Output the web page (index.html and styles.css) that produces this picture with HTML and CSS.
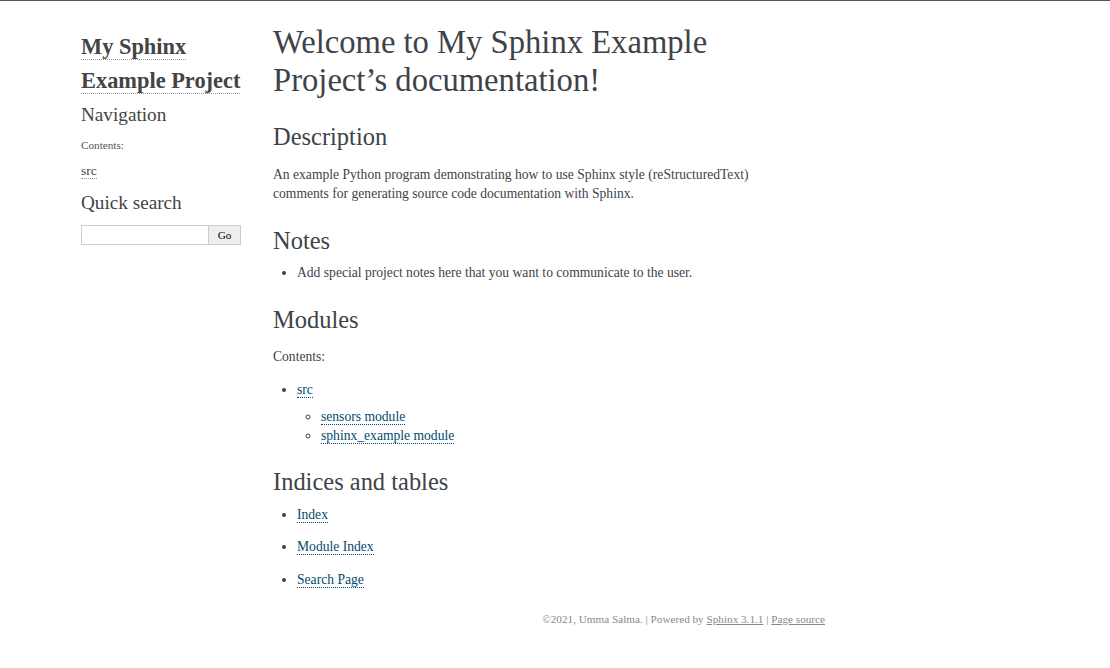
FILE: index.html
```html
<!DOCTYPE html>
<html lang="en">
<head>
<meta charset="utf-8">
<title>Welcome to My Sphinx Example Project’s documentation!</title>
<link rel="stylesheet" href="styles.css">
</head>
<body>
<div class="document">
  <div class="sphinxsidebar">
    <div class="sidebar-wrapper">
      <h1 class="logo"><a href="#">My Sphinx Example Project</a></h1>
      <h3 class="side-title">Navigation</h3>
      <p class="caption">Contents:</p>
      <ul class="side-toc">
        <li><a href="#">src</a></li>
      </ul>
      <h3 class="side-title">Quick search</h3>
      <form class="search">
        <input type="text" class="search-text"><input type="submit" class="search-go" value="Go">
      </form>
    </div>
  </div>
  <div class="body">
    <h1 class="title">Welcome to My Sphinx Example Project’s documentation!</h1>
    <h2 class="heading">Description</h2>
    <p class="para">An example Python program demonstrating how to use Sphinx style (reStructuredText) comments for generating source code documentation with Sphinx.</p>
    <h2 class="heading">Notes</h2>
    <ul class="list">
      <li>Add special project notes here that you want to communicate to the user.</li>
    </ul>
    <h2 class="heading">Modules</h2>
    <p class="para caption-body">Contents:</p>
    <ul class="list">
      <li><a class="ref" href="#">src</a>
        <ul class="list sub">
          <li><a class="ref" href="#">sensors module</a></li>
          <li><a class="ref" href="#">sphinx_example module</a></li>
        </ul>
      </li>
    </ul>
    <h2 class="heading heading-last">Indices and tables</h2>
    <ul class="list spaced">
      <li><a class="ref" href="#">Index</a></li>
      <li><a class="ref" href="#">Module Index</a></li>
      <li><a class="ref" href="#">Search Page</a></li>
    </ul>
  </div>
</div>
<div class="footer">
  ©2021, Umma Salma. | Powered by <a href="#">Sphinx 3.1.1</a> | <a href="#">Page source</a>
</div>
</body>
</html>
```
FILE: styles.css
```css
html, body {
  margin: 0;
  padding: 0;
}
body {
  font-family: "Liberation Serif", "DejaVu Serif", serif;
  font-size: 13.6px;
  color: #000;
  background: #fff;
  border-top: 1px solid #555;
}
.document {
  width: 752px;
  margin: 23px 0 0 73px;
  display: flex;
}
.sphinxsidebar {
  width: 176px;
  flex: none;
  font-size: 11.2px;
  line-height: 1.5;
}
.sidebar-wrapper {
  padding: 14.4px 8px;
}
.logo {
  margin: -8px 0 3px 0;
  font-size: 22.4px;
  font-weight: bold;
}
.logo a {
  color: #444;
  text-decoration: none;
  border-bottom: 1px dotted #999;
}
.side-title {
  font-size: 19.2px;
  font-weight: normal;
  color: #444;
  margin: 0 0 4px 0;
}
.caption {
  color: #555;
  margin: 8px 0 7px;
}
.side-toc {
  list-style: none;
  margin: 7px 0 8px;
  padding: 0;
}
.side-toc a {
  font-size: 13.44px;
  color: #444;
  text-decoration: none;
  border-bottom: 1px dotted #999;
}
.search {
  display: flex;
  margin: 7px 0 0;
}
.search-text {
  width: 80%;
  box-sizing: border-box;
  border: 1px solid #ccc;
  padding: 2.8px;
  font-family: "Liberation Serif", serif;
  font-size: 11.2px;
  height: 20px;
  margin: 0;
}
.search-go {
  width: 20%;
  box-sizing: border-box;
  border: 1px solid #ccc;
  border-left: none;
  background: #eee;
  color: #000;
  padding: 2.8px;
  font-family: "Liberation Serif", serif;
  font-size: 11.2px;
  height: 20px;
  margin: 0;
}
.body {
  flex: 1;
  padding: 0 24px;
  color: #3e4349;
}
.title {
  font-size: 32.64px;
  font-weight: normal;
  margin: 0 0 8px 0;
  line-height: 1.15;
}
.heading {
  font-size: 24.48px;
  font-weight: normal;
  margin: 24px 0 8px 0;
  line-height: 1.15;
}
.heading-last {
  margin-top: 23px;
}
.para {
  line-height: 1.4em;
  margin: 13.6px 0;
}
.caption-body {
  margin: 12.6px 0 13.6px;
}
.list {
  margin: 8px 0 8px 24px;
  padding: 0;
}
.list li {
  line-height: 1.4em;
}
.list.sub {
  list-style: circle;
}
.list.spaced {
  margin-top: 9px;
}
.list.spaced li + li {
  margin-top: 13.6px;
}
.ref {
  color: #004b6b;
  text-decoration: none;
  border-bottom: 1px dotted #004b6b;
}
.footer {
  width: 752px;
  margin: 16px 0 24px 73px;
  font-size: 11.2px;
  color: #888;
  text-align: right;
}
.footer a {
  color: #888;
}
```
